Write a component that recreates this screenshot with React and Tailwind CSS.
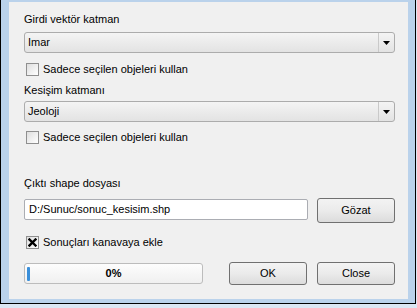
import React from 'react';

const font = { fontFamily: '"Liberation Sans", Arial, sans-serif' };

function Combo({ value }) {
  return (
    <div className="flex h-[21px] rounded-[3px] border border-[#acacac] bg-gradient-to-b from-[#f4f4f4] to-[#e3e3e3]">
      <div className="flex-1 flex items-center pl-[3px] text-[11px] text-black">{value}</div>
      <div className="w-[16px] border-l border-[#c9c9c9] flex items-center justify-center">
        <svg width="7" height="4" viewBox="0 0 7 4">
          <path d="M0 0 H7 L3.5 4 Z" fill="#000" />
        </svg>
      </div>
    </div>
  );
}

function Check({ checked, label }) {
  return (
    <div className="flex items-center h-[15px] pl-[2px]">
      <div className="w-[13px] h-[13px] border border-[#8f8f8f] bg-gradient-to-br from-[#dedede] to-[#ffffff] flex items-center justify-center">
        {checked && (
          <svg width="9" height="9" viewBox="0 0 9 9">
            <path d="M1.5 1.5 L7.5 7.5 M7.5 1.5 L1.5 7.5" stroke="#000" strokeWidth="2.4" strokeLinecap="square" />
          </svg>
        )}
      </div>
      <span className="ml-[4px] text-[11px] text-black">{label}</span>
    </div>
  );
}

function Button({ children, className = '' }) {
  return (
    <div className={`flex items-center justify-center rounded-[3px] border border-[#707070] bg-gradient-to-b from-[#f3f3f3] via-[#ebebeb] to-[#dcdcdc] text-[11px] text-black ${className}`}>
      {children}
    </div>
  );
}

export default function App() {
  return (
    <div className="w-[417px] h-[308px] bg-[#dbe6f3] overflow-hidden" style={font}>
      <div className="w-[416px] h-[304px] border-l border-r border-b border-black bg-[#bad2eb] pt-[2px] pl-[8px] pr-[7px] pb-[4px] flex">
        <div className="flex-1 bg-[#f0f0f0] pl-[15px] pr-[13px] flex flex-col">
          <div className="mt-[10px] h-[15px] leading-[15px] text-[11px] text-black">Girdi vektör katman</div>
          <div className="mt-[5px]"><Combo value="Imar" /></div>
          <div className="mt-[9px]"><Check label="Sadece seçilen objeleri kullan" /></div>

          <div className="mt-[6px] h-[15px] leading-[15px] text-[11px] text-black">Kesişim katmanı</div>
          <div className="mt-[3px]"><Combo value="Jeoloji" /></div>
          <div className="mt-[8px]"><Check label="Sadece seçilen objeleri kullan" /></div>

          <div className="mt-[31px] h-[15px] leading-[15px] text-[11px] text-black">Çıktı shape dosyası</div>
          <div className="mt-[7px] flex items-start h-[24px]">
            <div className="mt-[1px] w-[284px] h-[21px] rounded-[2px] border border-[#abadb3] bg-white flex items-center pl-[4px] text-[11px] text-black">
              D:/Sunuc/sonuc_kesisim.shp
            </div>
            <Button className="ml-auto w-[78px] h-[25px]">Gözat</Button>
          </div>

          <div className="mt-[13px]"><Check checked label="Sonuçları kanavaya ekle" /></div>

          <div className="mt-[12px] flex items-start h-[23px]">
            <div className="mt-[1px] w-[179px] h-[21px] rounded-[3px] border border-[#bcbcbc] bg-gradient-to-b from-[#fdfdfd] to-[#f0f0f0] relative flex items-center justify-center">
              <div className="absolute left-[2px] top-[3px] w-[3px] h-[14px] bg-[#3a8fda] rounded-[1px]" />
              <span className="text-[11px] font-bold text-black">0%</span>
            </div>
            <Button className="ml-[26px] w-[78px] h-[23px]">OK</Button>
            <Button className="ml-auto w-[78px] h-[23px]">Close</Button>
          </div>
        </div>
      </div>
    </div>
  );
}
